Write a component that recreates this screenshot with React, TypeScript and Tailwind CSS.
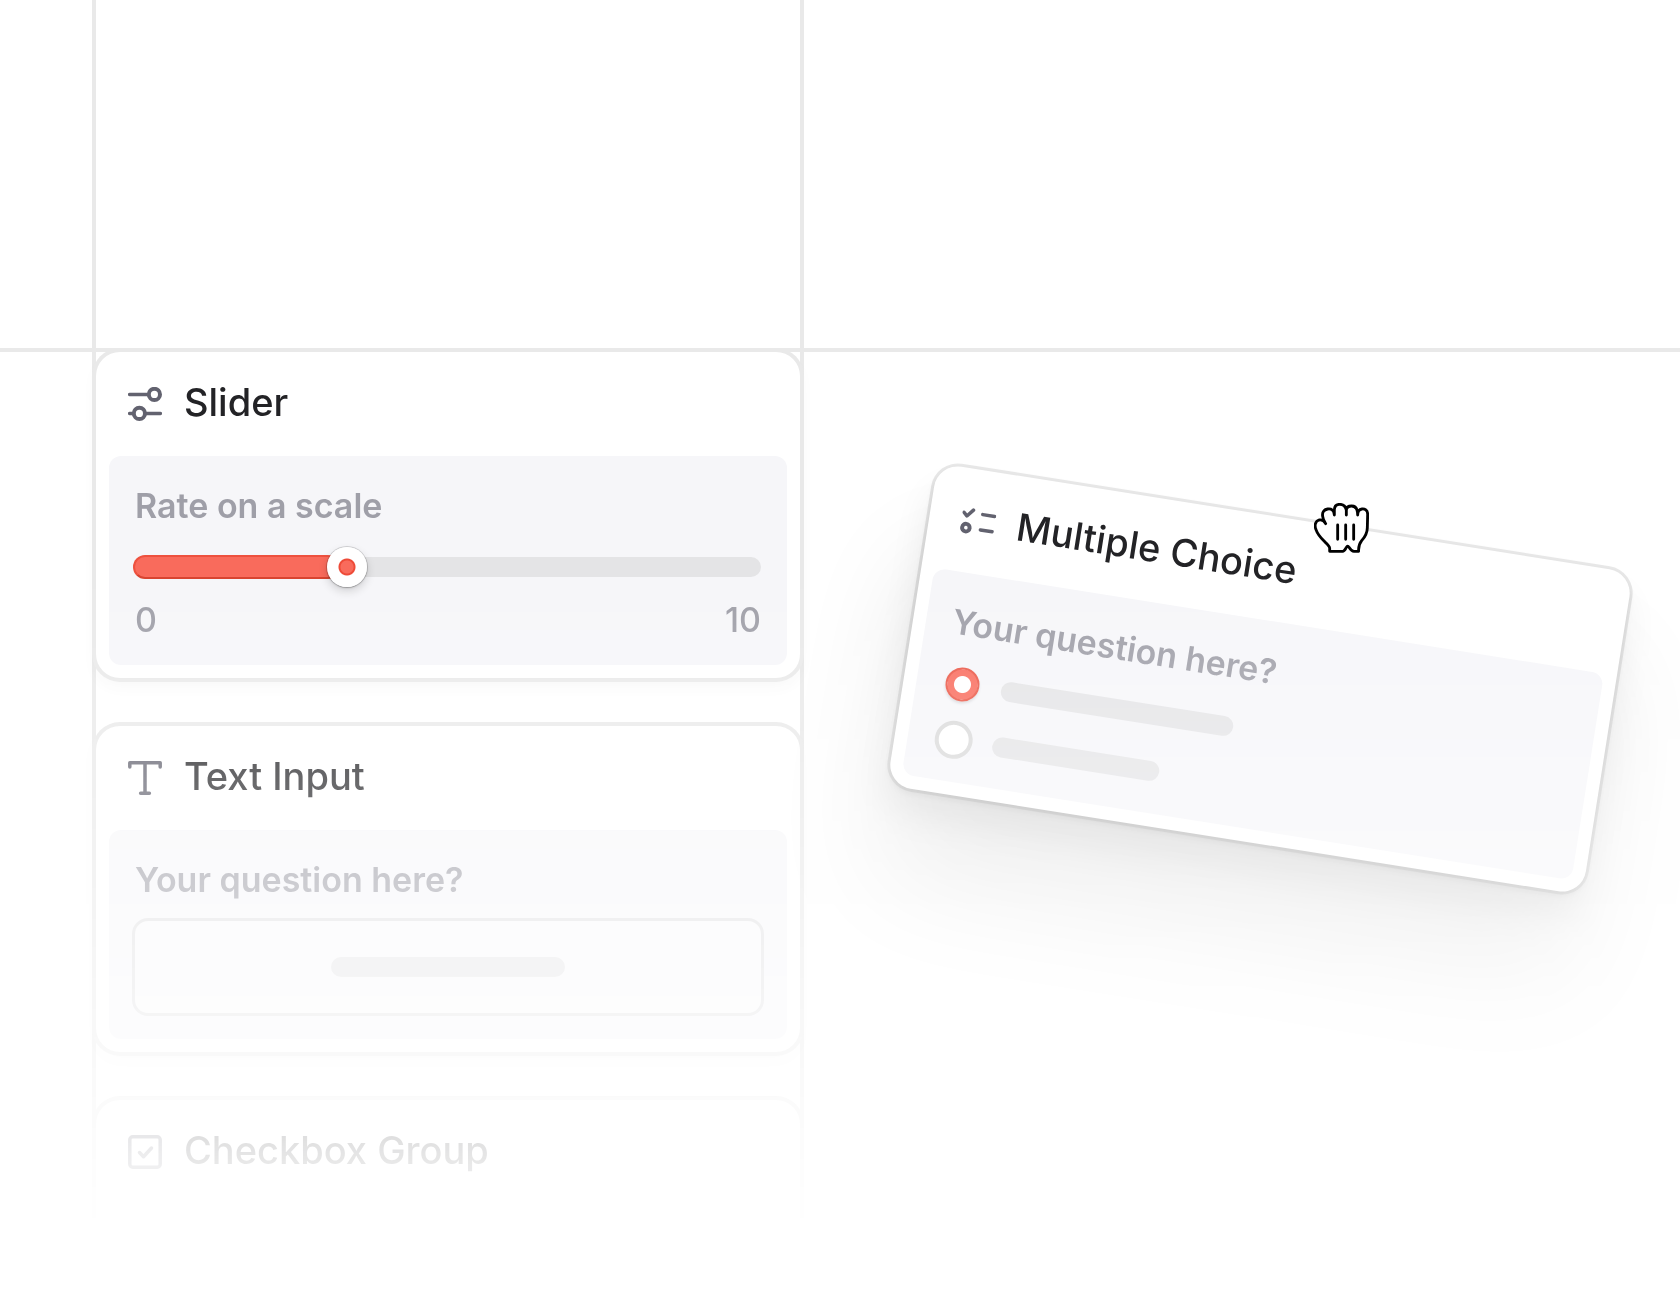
import { useState, type ReactNode } from "react";
import { clsx } from "clsx";

const Icon: React.FC<{ children: ReactNode }> = ({ children }) => (
  <svg
    viewBox="0 0 34 34"
    className="size-[34px] shrink-0 text-[#62626f]"
    fill="none"
    stroke="currentColor"
    strokeWidth="3.5"
    strokeLinecap="round"
    strokeLinejoin="round"
    aria-hidden="true"
  >
    {children}
  </svg>
);

const SliderIcon = () => (
  <Icon>
    <path d="M1.7 7.4H20M14 26.4H32.3M1.7 26.4H5" />
    <circle cx="26.4" cy="7.4" r="5.6" fill="white" strokeWidth="4" />
    <circle cx="11.4" cy="26.4" r="5.6" fill="white" strokeWidth="4" />
  </Icon>
);

const TextIcon = () => (
  <Icon>
    <path d="M1.8 6V1.8H32.2V6M17 1.8V32.2M12.6 32.2H21.4" />
  </Icon>
);

const CheckboxIcon = () => (
  <Icon>
    <rect x="1.8" y="1.8" width="30.4" height="30.4" rx="3" />
    <path d="M11.5 17.5L15.5 21.7L23.5 13" />
  </Icon>
);

const ChoiceIcon = () => (
  <Icon>
    <path d="M1.6 9.6L5 12.8L10.6 6M20.5 9H32.5M20.5 24.5H32.5" />
    <circle cx="5.8" cy="24.5" r="3.8" strokeWidth="4" />
  </Icon>
);

const GrabHand: React.FC<{ className?: string }> = ({ className }) => (
  <svg
    viewBox="0 0 165 150"
    className={clsx("h-[50px] w-[55px]", className)}
    stroke="black"
    strokeWidth="8.5"
    strokeLinecap="round"
    strokeLinejoin="round"
    aria-hidden="true"
  >
    <path
      fill="white"
      d="M35 62C30 53 24 49 15 51C3 55 1 68 6 80C12 98 24 108 34 118C44 127 47 130 47 136V145H86C91 145 93 140 97 133Q101 126 105 133C110 141 114 145 120 145H134C133 132 134 124 143 113C156 98 160 88 160 74L161 34C161 21 152 17 144 18C136 19 131 24 131 36C131 20 125 9 113 9C103 9 97 14 97 22V36V22C95 10 88 4 77 4C66 4 61 12 61 22V36C60 22 52 16 41 18C29 20 24 28 26 40C27 50 31 56 35 62Z"
    />
    <path fill="none" d="M71 66V109M95 66V109M119 66V109" />
  </svg>
);

const Card: React.FC<{
  title: string;
  icon: ReactNode;
  className?: string;
  children?: ReactNode;
}> = ({ title, icon, className, children }) => (
  <section className={clsx("rounded-3xl bg-white px-[13px] pb-[13px]", className)}>
    <div className="flex h-[104px] items-center gap-[22px] px-[19px]">
      {icon}
      <h2 className="pb-1 text-[38px] leading-[48px] font-medium text-[#232326]">{title}</h2>
    </div>
    <div className="flex h-[209px] flex-col rounded-xl bg-[#f6f6f9] px-6 pt-7">{children}</div>
  </section>
);

const cardFrame = "ring-4 ring-[#e9e9e9] shadow-[0_8px_16px_rgba(0,0,0,0.04)]";
const labelText = "px-[2px] text-[34px] leading-[44px] text-[#9f9fa8]";

const SliderCard = () => {
  const [value, setValue] = useState(3.3);

  return (
    <Card title="Slider" icon={<SliderIcon />} className={cardFrame}>
      <label htmlFor="rate" className={clsx(labelText, "font-semibold")}>
        Rate on a scale
      </label>
      <div className="relative mt-4 mr-[2px] flex h-[46px] shrink-0 items-center">
        <div className="h-5 w-full rounded-full bg-[#e4e4e6]" />
        <div
          className="absolute left-0 h-6 rounded-full border-2 border-[#ee513f] border-b-[#d9432f] bg-[#f96b5c]"
          style={{ width: `${value * 10}%` }}
        />
        <input
          id="rate"
          type="range"
          min={0}
          max={10}
          step={0.1}
          value={value}
          onChange={(e) => setValue(Number(e.target.value))}
          className="absolute inset-0 w-full cursor-pointer appearance-none bg-transparent [&::-webkit-slider-thumb]:size-10 [&::-webkit-slider-thumb]:appearance-none [&::-webkit-slider-thumb]:rounded-full [&::-webkit-slider-thumb]:bg-[radial-gradient(circle,#f96b5c_6px,#ee4b38_7px,#ee4b38_8px,#ffffff_9px)] [&::-webkit-slider-thumb]:shadow-[0_0_0_1px_rgba(0,0,0,0.14),0_1px_2px_rgba(0,0,0,0.2),0_4px_10px_rgba(0,0,0,0.16)]"
        />
      </div>
      <div className={clsx(labelText, "mt-2 flex justify-between font-medium")}>
        <span>0</span>
        <span>10</span>
      </div>
    </Card>
  );
};

const TextInputCard = () => (
  <Card title="Text Input" icon={<TextIcon />} className={cardFrame}>
    <label htmlFor="answer" className={clsx(labelText, "font-semibold")}>
      Your question here?
    </label>
    <div className="relative -mx-px mt-4 flex items-center justify-center">
      <input
        id="answer"
        type="text"
        className="h-[98px] w-full rounded-2xl border-[3px] border-[#e0e0e2] bg-[#f8f8fa] px-6"
      />
      <div className="pointer-events-none absolute h-5 w-[234px] rounded-full bg-[#e4e4e6]" />
    </div>
  </Card>
);

const MultipleChoiceCard: React.FC<{ className?: string }> = ({ className }) => (
  <Card title="Multiple Choice" icon={<ChoiceIcon />} className={className}>
    <p className={clsx(labelText, "font-semibold")}>Your question here?</p>
    <div className="mt-5 flex flex-col gap-[18px] pl-[3px]">
      <label className="flex h-[38px] items-center gap-5">
        <input
          type="radio"
          name="choice"
          aria-label="First option"
          defaultChecked
          className="mx-[2px] size-[34px] shrink-0 appearance-none rounded-full border-2 border-[#ea5443] bg-[radial-gradient(circle,#ffffff_8px,#f96b5c_9px)] shadow-[0_2px_3px_rgba(0,0,0,0.12)]"
        />
        <span className="h-5 w-[235px] rounded-full bg-[#e4e4e6]" />
      </label>
      <label className="flex h-[38px] items-center gap-5">
        <input
          type="radio"
          name="choice"
          aria-label="Second option"
          className="size-[38px] shrink-0 appearance-none rounded-full border-4 border-[#d9d9d9] bg-white"
        />
        <span className="h-5 w-[169px] rounded-full bg-[#e4e4e6]" />
      </label>
    </div>
  </Card>
);

export default function App() {
  return (
    <main className="grid h-screen grid-cols-[92fr_712fr_876fr] grid-rows-[352px_1fr] overflow-hidden bg-white font-['Inter',sans-serif] [mask-image:linear-gradient(to_bottom,black_575px,transparent_1232px)]">
      <div className="border-b-4 border-[#e9e9e9]" />
      <div className="border-x-4 border-b-4 border-[#e9e9e9]" />
      <div className="border-b-4 border-[#e9e9e9]" />

      <div />
      <div className="flex min-h-0 flex-col gap-12 border-x-4 border-[#e9e9e9]">
        <SliderCard />
        <TextInputCard />
        <Card title="Checkbox Group" icon={<CheckboxIcon />} className={cardFrame} />
      </div>

      {/* canvas with the card being dragged */}
      <div className="relative min-h-0 pt-[164px] pr-[68px] pl-[104px]">
        <MultipleChoiceCard className="rotate-9 shadow-[0_0_0_3px_rgba(0,0,0,0.09),0_4px_6px_rgba(0,0,0,0.08),0_24px_36px_rgba(0,0,0,0.07),0_96px_110px_rgba(0,0,0,0.1)]" />
        <GrabHand className="absolute top-[151px] left-[510px] cursor-grab" />
      </div>
    </main>
  );
}
